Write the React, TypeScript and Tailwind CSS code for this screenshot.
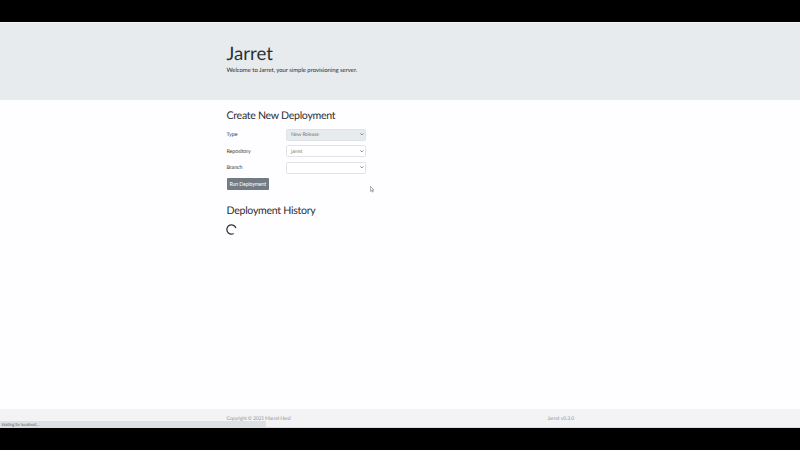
import { ReactNode } from "react";

function Chevron() {
  return (
    <svg viewBox="0 0 6 4" className="h-[2.6px] w-[3.6px] shrink-0" fill="none" stroke="#686d71" strokeWidth="1.5">
      <path d="M0.6 0.6 3 3 5.4 0.6" />
    </svg>
  );
}

function Field({ label, value, disabled }: { label: string; value: ReactNode; disabled?: boolean }) {
  return (
    <div className="flex h-[12px] items-center">
      <div className="w-[59.5px] pt-[2.2px] text-[5.4px] leading-[7px] tracking-[-0.12px] text-[#3b4146]">{label}</div>
      <div
        className={`flex h-[12px] w-[80px] items-center justify-between rounded-[1.5px] border border-[#e0e3e6] pr-[1px] pl-[4px] text-[5.2px] leading-[7px] tracking-[-0.12px] text-[#767c81] ${disabled ? "bg-[#e7ebee]" : "bg-white"}`}
      >
        <span className="pt-[2.2px]">{value}</span>
        <Chevron />
      </div>
    </div>
  );
}

export default function App() {
  return (
    <div className="relative flex h-[450px] w-[800px] flex-col overflow-hidden bg-[#fefdff] font-['Lato',sans-serif] text-[#2b3035] [text-rendering:geometricPrecision]">
      <div className="h-[22px] shrink-0 bg-black" />
      <header className="h-[77.5px] shrink-0 border-t border-[#f4f6f7] bg-[#e7ebee] pl-[226.5px]">
        <h1 className="mt-[20px] text-[18.6px] leading-[21px]">Jarret</h1>
        <p className="mt-[3px] text-[6px] leading-[8px] tracking-[-0.06px]">Welcome to Jarret, your simple provisioning server.</p>
      </header>
      <main className="flex-1 pl-[226.5px]">
        <h2 className="mt-[10.5px] text-[10.6px] leading-[12px] tracking-[-0.3px]">Create New Deployment</h2>
        <div className="mt-[6.5px] flex flex-col gap-[4.6px]">
          <Field label="Type" value="New Release" disabled />
          <Field label="Repository" value="jarret" />
          <Field label="Branch" value="" />
        </div>
        <button className="mt-[4.8px] flex h-[11.4px] w-[42.5px] items-center justify-center rounded-[1px] bg-[#727b84] pt-[1px] text-[5.2px] tracking-[-0.14px] text-white">
          Run Deployment
        </button>
        <h2 className="mt-[15.1px] text-[10.6px] leading-[12px] tracking-[-0.29px]">Deployment History</h2>
        <svg viewBox="0 0 11 11" className="mt-[7px] -ml-[0.5px] h-[11px] w-[11px]" fill="none" stroke="#303438" strokeWidth="1.25">
          <path d="M9.9 4.2A4.6 4.6 0 1 0 7.7 9.5" />
        </svg>
      </main>
      <footer className="flex h-[19px] shrink-0 items-center justify-between border-b border-[#dcdcdc] bg-[#f3f2f4] pt-[3px] pr-[226px] pl-[226.5px] text-[5.1px] leading-[7px] text-[#92979c]">
        <span className="tracking-[-0.2px]">Copyright © 2021 Marcel Herd</span>
        <span className="tracking-[-0.09px]">Jarret v0.3.0</span>
      </footer>
      <div className="h-[22px] shrink-0 bg-black" />
      <div className="absolute top-[421px] left-0 flex h-[6px] w-[266px] items-center bg-[#dce0e3] pt-[3px] pl-[1.5px] font-['Open_Sans',sans-serif] text-[4px] leading-[6px] tracking-[-0.17px] text-[#50565a]">
        Waiting for localhost...
      </div>
      <svg viewBox="0 0 12 18" className="absolute top-[186.2px] left-[370.3px] h-[6.5px] w-[4.3px]" fill="#fff" stroke="#777" strokeWidth="1.8">
        <path d="M1 1v14l3.3-3 2.4 5 2.3-1-2.3-5H11z" />
      </svg>
    </div>
  );
}
